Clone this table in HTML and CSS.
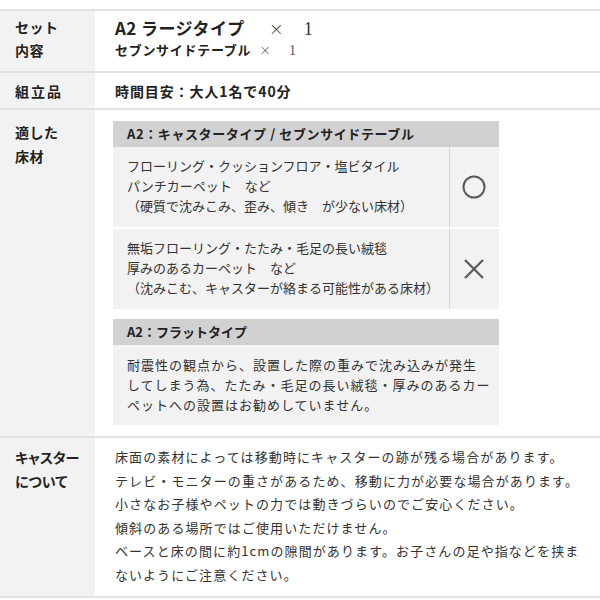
FILE: index.html
```html
<!DOCTYPE html>
<html lang="ja">
<head>
<meta charset="utf-8">
<link rel="stylesheet" href="styles.css">
</head>
<body>
<div class="spec">
  <div class="row row-set">
    <div class="label">セット<br>内容</div>
    <div class="content">
      <div class="set-main">A2 ラージタイプ<span class="times big">×</span><span class="qty big">1</span></div>
      <div class="set-sub">セブンサイドテーブル<span class="times small">×</span><span class="qty small">1</span></div>
    </div>
  </div>
  <div class="row row-build">
    <div class="label label-wide">組立品</div>
    <div class="content build">時間目安：大人1名で40分</div>
  </div>
  <div class="row row-floor">
    <div class="label label-floor">適した<br>床材</div>
    <div class="content floor">
      <div class="box">
        <div class="box-head head-wide">A2：キャスタータイプ / セブンサイドテーブル</div>
        <div class="fit">
          <div class="fit-text">フローリング・クッションフロア・塩ビタイル<br>パンチカーペット　など<br>（硬質で沈みこみ、歪み、傾き　が少ない床材）</div>
          <div class="fit-mark">
            <svg width="24" height="24" viewBox="0 0 24 24"><circle cx="12" cy="12" r="10.5" fill="none" stroke="#5a5a5a" stroke-width="2"/></svg>
          </div>
        </div>
        <div class="fit">
          <div class="fit-text">無垢フローリング・たたみ・毛足の長い絨毯<br>厚みのあるカーペット　など<br>（沈みこむ、キャスターが絡まる可能性がある床材）</div>
          <div class="fit-mark">
            <svg width="22" height="22" viewBox="0 0 22 22"><path d="M2 2 L20 20 M20 2 L2 20" stroke="#5a5a5a" stroke-width="2.2" fill="none"/></svg>
          </div>
        </div>
      </div>
      <div class="box box-flat">
        <div class="box-head">A2：フラットタイプ</div>
        <div class="flat-text">耐震性の観点から、設置した際の重みで沈み込みが発生<br>してしまう為、たたみ・毛足の長い絨毯・厚みのあるカー<br>ペットへの設置はお勧めしていません。</div>
      </div>
    </div>
  </div>
  <div class="row row-caster">
    <div class="label label-caster">キャスター<br>について</div>
    <div class="content caster">床面の素材によっては移動時にキャスターの跡が残る場合があります。<br>テレビ・モニターの重さがあるため、移動に力が必要な場合があります。<br>小さなお子様やペットの力では動きづらいのでご安心ください。<br>傾斜のある場所ではご使用いただけません。<br>ベースと床の間に約1cmの隙間があります。お子さんの足や指などを挟ま<br>ないようにご注意ください。</div>
  </div>
</div>
</body>
</html>
```

FILE: styles.css
```css
html, body {
  margin: 0;
  padding: 0;
  background: #ffffff;
}

body {
  padding-top: 9px;
  font-family: "Noto Sans CJK JP", "Noto Sans", sans-serif;
  color: #333333;
}

.spec {
  width: 600px;
  border-top: 2px solid #e2e2e2;
}

.row {
  display: flex;
  border-bottom: 2px solid #e2e2e2;
}

.label {
  width: 95px;
  flex: none;
  box-sizing: border-box;
  background: #f2f2f2;
  padding-left: 15px;
  font-size: 14px;
  font-weight: 700;
  color: #222222;
  letter-spacing: 0.5px;
}

.content {
  flex: 1;
  padding-left: 20px;
}

/* row 1 */
.row-set {
  height: 60px;
}

.row-set .label {
  padding-top: 5px;
  line-height: 23px;
}

.row-set .content {
  padding-top: 6px;
}

.set-main {
  height: 22px;
  font-size: 17px;
  font-weight: 700;
  line-height: 22px;
  letter-spacing: 0.4px;
  color: #222222;
  white-space: nowrap;
}

.set-sub {
  height: 22px;
  font-size: 13px;
  font-weight: 700;
  line-height: 22px;
  letter-spacing: 0.7px;
  color: #222222;
  white-space: nowrap;
}

.times {
  font-family: "DejaVu Sans", sans-serif;
  font-weight: 300;
  color: #444444;
  letter-spacing: 0;
}

.times.big {
  margin-left: 24px;
  font-size: 18px;
}

.times.small {
  margin-left: 8px;
  font-size: 14px;
  color: #666666;
}

.qty {
  font-family: "Liberation Serif", serif;
  font-weight: 400;
  color: #333333;
  letter-spacing: 0;
}

.qty.big {
  margin-left: 20px;
  font-size: 18px;
}

.qty.small {
  margin-left: 18px;
  font-size: 14px;
  color: #555555;
}

/* row 2 */
.row-build {
  height: 35px;
}

.label-wide {
  display: flex;
  align-items: center;
  letter-spacing: 2px;
}

.build {
  display: flex;
  align-items: center;
  font-size: 14px;
  font-weight: 700;
  letter-spacing: 0.9px;
  color: #222222;
}

/* row 3 */
.label-floor {
  padding-top: 10px;
  line-height: 24px;
}

.floor {
  padding-top: 11px;
  padding-bottom: 11px;
  padding-left: 18px;
}

.box {
  width: 386px;
}

.box-flat {
  margin-top: 10px;
}

.box-head {
  height: 26px;
  line-height: 26px;
  background: #d1d1d1;
  padding-left: 14px;
  font-size: 13px;
  font-weight: 700;
  color: #222222;
}

.head-wide {
  letter-spacing: 0.6px;
}

.fit {
  display: flex;
  background: #f2f2f2;
  margin-bottom: 2px;
}

.fit:last-child {
  margin-bottom: 0;
}

.fit-text {
  flex: 1;
  padding: 9px 0 11px 14px;
  font-size: 13px;
  line-height: 20px;
  color: #333333;
  border-right: 1px solid #d6d6d6;
}

.fit-mark {
  width: 49px;
  box-sizing: border-box;
  padding-right: 2px;
  display: flex;
  align-items: center;
  justify-content: center;
}

.flat-text {
  background: #f2f2f2;
  padding: 10px 0 10px 14px;
  font-size: 13px;
  line-height: 20px;
  letter-spacing: 1px;
  color: #333333;
}

/* row 4 */
.label-caster {
  padding-top: 7px;
  line-height: 24px;
  letter-spacing: 0;
  font-feature-settings: "palt";
}

.caster {
  padding-top: 7px;
  padding-bottom: 9px;
  font-size: 13px;
  line-height: 23.6px;
  letter-spacing: 1.1px;
  color: #333333;
}
```
